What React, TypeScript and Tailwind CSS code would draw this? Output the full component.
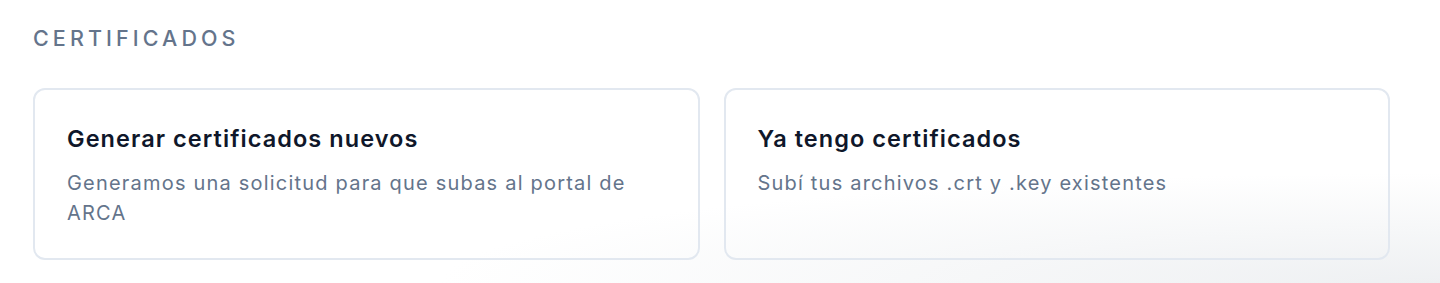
import React from "react";

export default function App() {
  return (
    <div
      className="w-[1440px] h-[283px] bg-white bg-[radial-gradient(1000px_110px_at_100%_100%,#eef0f2,#ffffff)] pl-[33px] pr-[50px] pt-[20px]"
      style={{ fontFamily: "Inter, 'Noto Sans', sans-serif" }}
    >
      <h2 className="text-[21.5px] leading-[36px] font-medium tracking-[0.19em] text-[#64748b] uppercase">
        Certificados
      </h2>
      <div className="mt-[32px] grid grid-cols-2 gap-[24px]">
        <button className="text-left rounded-[12px] border-2 border-[#e2e8f0] px-[32px] pt-[34px] pb-[30px]">
          <div className="text-[23.5px] leading-[30px] font-semibold tracking-[0.045em] text-[#0f172a]">
            Generar certificados nuevos
          </div>
          <p className="mt-[14px] text-[20px] leading-[30px] tracking-[0.06em] text-[#64748b]">
            Generamos una solicitud para que subas al portal de ARCA
          </p>
        </button>
        <button className="text-left rounded-[12px] border-2 border-[#e2e8f0] px-[32px] pt-[34px] pb-[30px] flex flex-col justify-start">
          <div className="text-[23.5px] leading-[30px] font-semibold tracking-[0.045em] text-[#0f172a]">
            Ya tengo certificados
          </div>
          <p className="mt-[14px] text-[20px] leading-[30px] tracking-[0.06em] text-[#64748b]">
            Subí tus archivos .crt y .key existentes
          </p>
        </button>
      </div>
    </div>
  );
}
